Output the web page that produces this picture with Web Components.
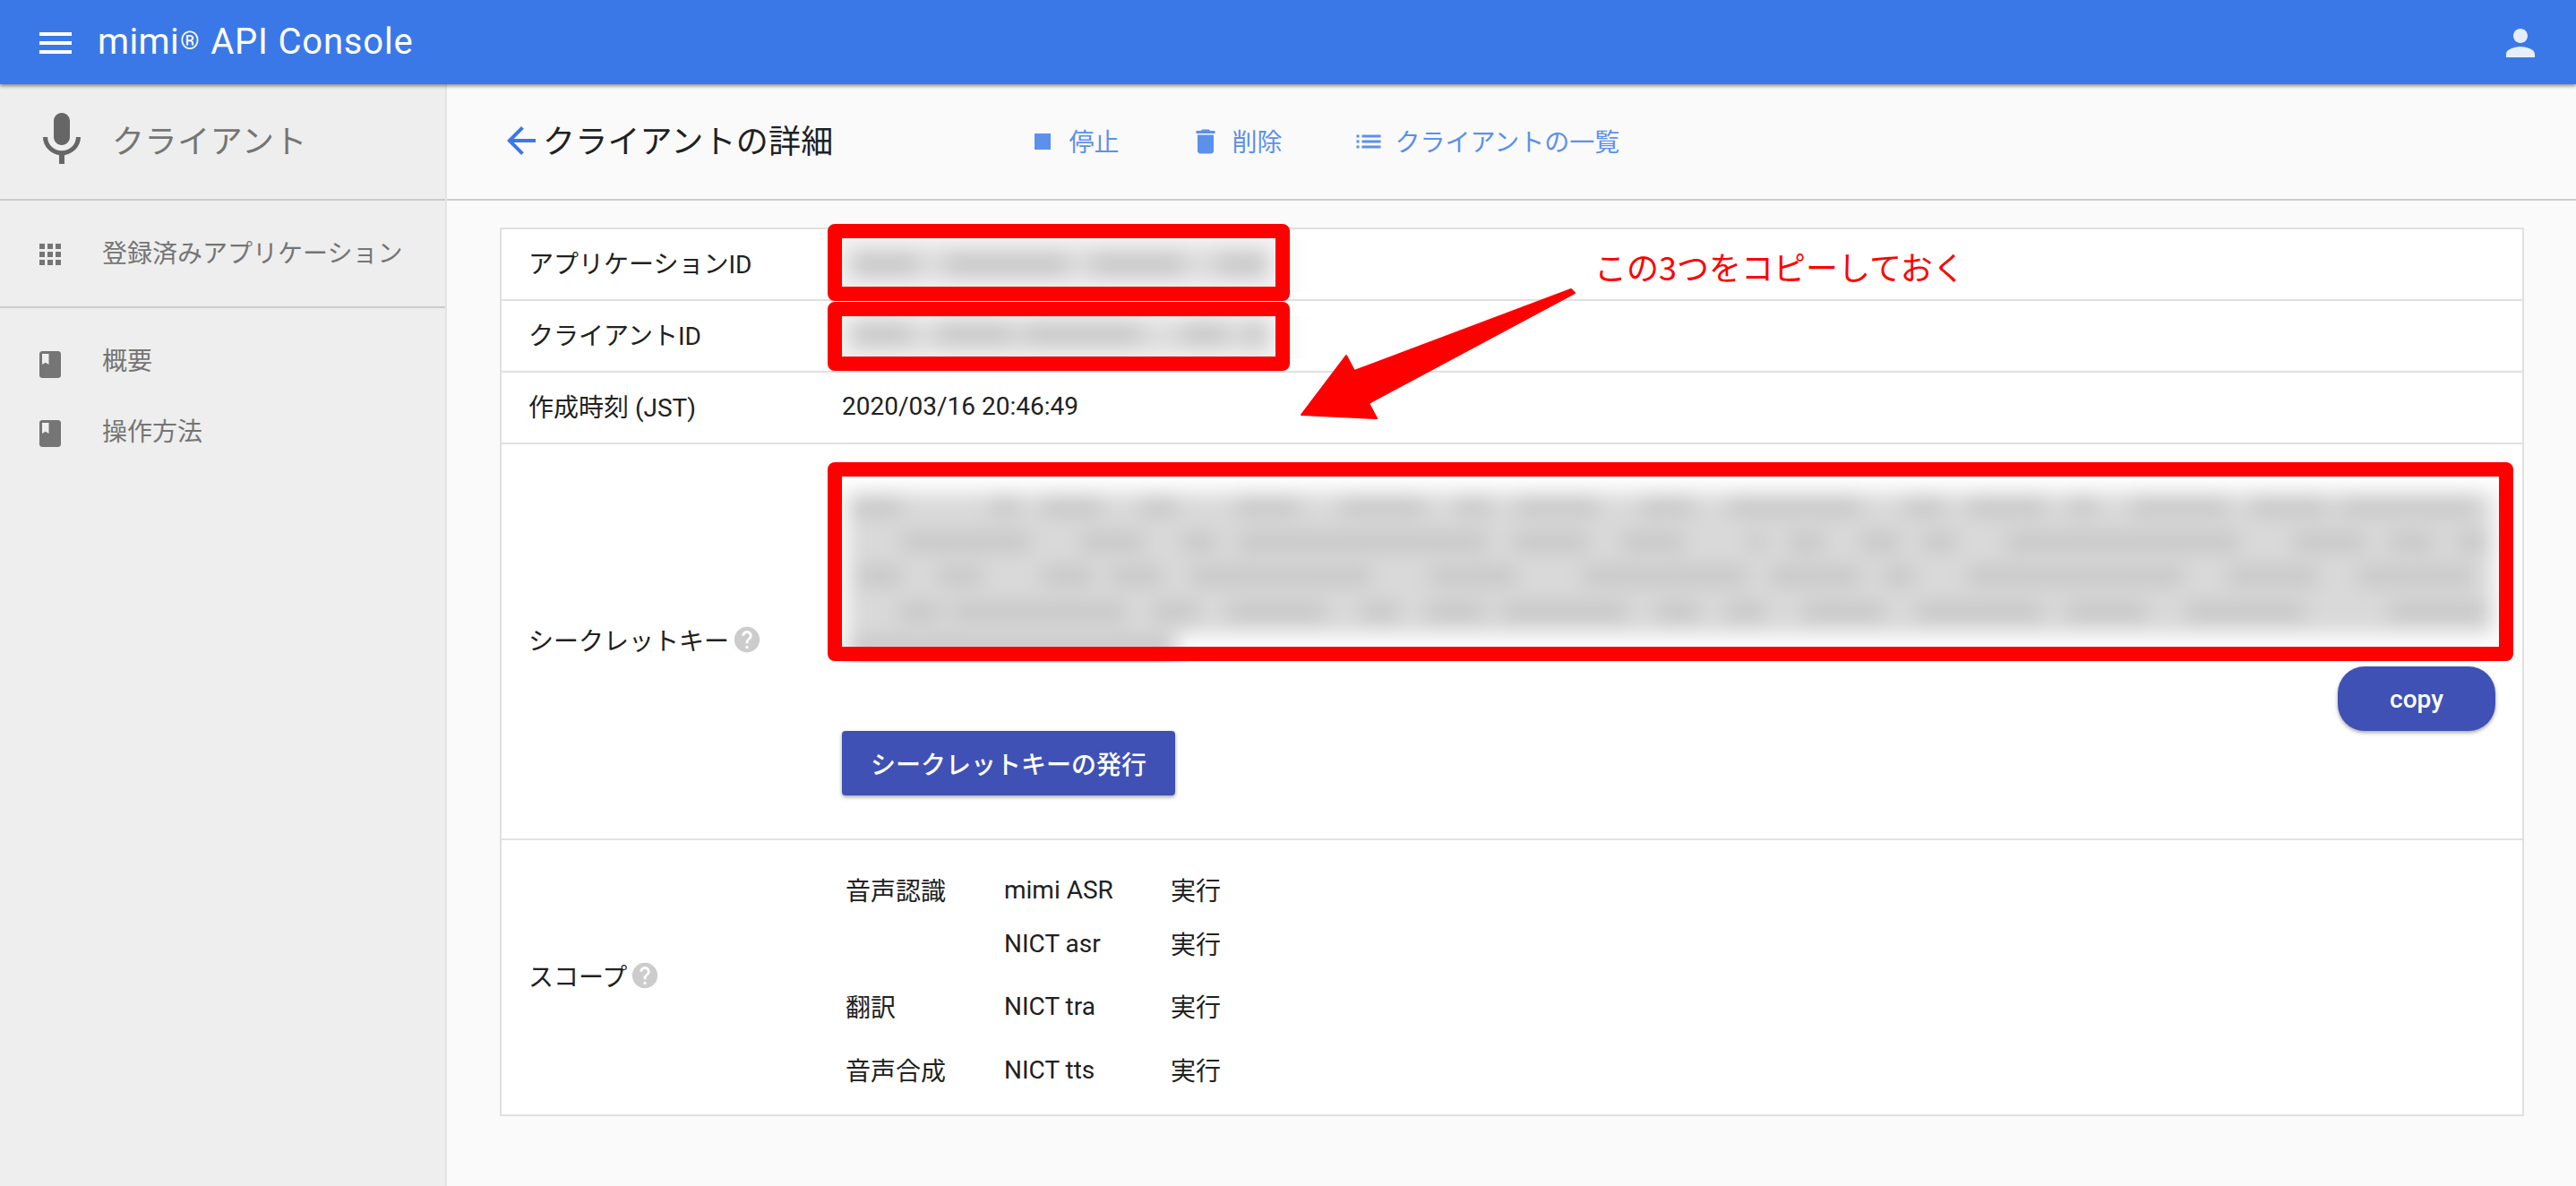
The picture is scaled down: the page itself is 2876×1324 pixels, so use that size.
<!DOCTYPE html>
<html lang="ja"><head><meta charset="utf-8"><title>mimi API Console</title>
<style>
html,body{margin:0;padding:0;height:100%;background:#fafafa;font-family:Roboto,"Noto Sans CJK JP",sans-serif;}
body{width:2876px;height:1324px;overflow:hidden;position:relative}
</style></head><body>
<x-app></x-app>
<script>
const FONT = 'Roboto,"Noto Sans CJK JP",sans-serif';
const ICONS = {
 menu:'M3 18h18v-2H3v2zm0-5h18v-2H3v2zm0-7v2h18V6H3z',
 person:'M12 12c2.21 0 4-1.79 4-4s-1.79-4-4-4-4 1.79-4 4 1.79 4 4 4zm0 2c-2.67 0-8 1.34-8 4v2h16v-2c0-2.66-5.33-4-8-4z',
 mic:'M12 14c1.66 0 2.99-1.34 2.99-3L15 5c0-1.66-1.34-3-3-3S9 3.34 9 5v6c0 1.66 1.34 3 3 3zm5.3-3c0 3-2.54 5.1-5.3 5.1S6.7 14 6.7 11H5c0 3.41 2.72 6.23 6 6.72V21h2v-3.28c3.28-.48 6-3.3 6-6.72h-1.7z',
 apps:'M4 8h4V4H4v4zm6 12h4v-4h-4v4zm-6 0h4v-4H4v4zm0-6h4v-4H4v4zm6 0h4v-4h-4v4zm6-10v4h4V4h-4zm-6 4h4V4h-4v4zm6 6h4v-4h-4v4zm0 6h4v-4h-4v4z',
 book:'M18 2H6c-1.1 0-2 .9-2 2v16c0 1.1.9 2 2 2h12c1.1 0 2-.9 2-2V4c0-1.1-.9-2-2-2zM6 4h5v8l-2.5-1.5L6 12V4z',
 back:'M20 11H7.83l5.59-5.59L12 4l-8 8 8 8 1.41-1.41L7.83 13H20v-2z',
 stop:'M6 6h12v12H6z',
 del:'M6 19c0 1.1.9 2 2 2h8c1.1 0 2-.9 2-2V7H6v12zM19 4h-3.5l-1-1h-5l-1 1H5v2h14V4z',
 list:'M3 13h2v-2H3v2zm0 4h2v-2H3v2zm0-8h2V7H3v2zm4 4h14v-2H7v2zm0 4h14v-2H7v2zM7 7v2h14V7H7z',
 help:'M12 2C6.48 2 2 6.48 2 12s4.48 10 10 10 10-4.48 10-10S17.52 2 12 2zm1 17h-2v-2h2v2zm2.07-7.75l-.9.92C13.45 12.9 13 13.5 13 15h-2v-.5c0-1.1.45-2.1 1.17-2.83l1.24-1.26c.37-.36.59-.86.59-1.41 0-1.1-.9-2-2-2s-2 .9-2 2H8c0-2.21 1.79-4 4-4s4 1.79 4 4c0 .88-.36 1.68-.93 2.25z'
};
const BLUR = {
 b1:{w:484,h:54,sd:11,base:[[-20,-20,524,94,'#f4f4f4'],[6,8,472,38,'#dcdcdc']],rows:[[27,22,[[953,1023],[1057,1190],[1220,1320],[1360,1413]]]]},
 b2:{w:484,h:44,sd:11,base:[[-20,-20,524,84,'#f4f4f4'],[6,4,472,36,'#dcdcdc']],rows:[[19,22,[[953,1017],[1047,1130],[1143,1273],[1320,1370],[1390,1413]]]]},
 b3:{w:1850,h:200,sd:11,base:[[6,14,1838,158,'#d9d9d9'],[6,150,368,70,'#d9d9d9']],rows:[
   [29,20,[[950,1007],[1107,1137],[1163,1230],[1273,1313],[1380,1450],[1497,1590],[1627,1663],[1693,1783],[1833,1890],[1930,1970],[1970,2077],[2127,2170],[2197,2283],[2310,2340],[2380,2487],[2513,2597],[2613,2763]]],
   [69,20,[[1007,1150],[1207,1277],[1320,1357],[1383,1660],[1690,1773],[1810,1880],[1953,1970],[1997,2037],[2077,2120],[2147,2183],[2240,2500],[2560,2640],[2667,2717],[2743,2777]]],
   [107,20,[[957,1007],[1047,1097],[1163,1220],[1240,1297],[1330,1530],[1597,1693],[1767,1950],[1977,2077],[2103,2137],[2197,2437],[2487,2587],[2633,2760]]],
   [147,20,[[1003,1050],[1063,1257],[1287,1337],[1370,1480],[1520,1560],[1593,1657],[1677,1817],[1850,1897],[1927,1970],[2013,2103],[2140,2280],[2307,2397],[2440,2573],[2667,2777]]],
   [186,20,[[950,1310]]]
 ]}
};
function def(name, css, html){
  customElements.define(name, class extends HTMLElement{
    connectedCallback(){
      if(this.shadowRoot) return;
      const r=this.attachShadow({mode:'open'});
      r.innerHTML='<style>'+css+'</style>'+(typeof html==='function'?html(this):html);
    }
  });
}
def('x-icon',':host{display:block;flex:none;line-height:0}svg{display:block}',h=>{
  const s=h.getAttribute('size')||48,c=h.getAttribute('color')||'currentColor';
  return `<svg width="${s}" height="${s}" viewBox="0 0 24 24"><path fill="${c}" d="${ICONS[h.getAttribute('name')]}"/></svg>`;
});
def('x-blur',':host{display:block;clip-path:inset(0 0 -4px 0)}svg{display:block;overflow:visible}',h=>{
  const id=h.getAttribute('data-set'),d=BLUR[id];
  const rects=d.base.map(b=>`<rect x="${b[0]}" y="${b[1]}" width="${b[2]}" height="${b[3]}" fill="${b[4]}"/>`).join('')+
    d.rows.map(([y,t,l])=>l.map(([a,b])=>`<rect x="${a-940}" y="${y-t/2}" width="${b-a}" height="${t}" fill="#c6c6c6"/>`).join('')).join('');
  return `<svg width="${d.w}" height="${d.h}" viewBox="0 0 ${d.w} ${d.h}" style="filter:blur(${d.sd}px)">${rects}</svg>`;
});
def('x-topbar',`:host{display:flex;align-items:center;height:94px;background:#3b78e7;box-shadow:0 2px 4px rgba(0,0,0,.45);position:relative;z-index:2;color:#fff;padding:0 38px;box-sizing:border-box}
 .t{font:400 40px ${FONT};margin-left:23px;letter-spacing:.8px;flex:1;padding-bottom:2px}
 .t span{font-size:27px;position:relative;top:-5px;margin:0 2px 0 1px;letter-spacing:0}
 .m{letter-spacing:.4px;font-style:normal}
 x-icon{margin-top:2px}`,
 `<x-icon name="menu" color="#fff"></x-icon><div class="t"><i class="m">mimi</i><span>®</span> API Console</div><x-icon name="person" color="#e6eefc"></x-icon>`);
def('x-sideitem',`:host{display:flex;align-items:center;height:72px;padding-left:38px;gap:40px;font:400 28px ${FONT};color:#757575}
 span{padding-bottom:var(--lift,7px)}`,
 h=>`<x-icon name="${h.getAttribute('icon')}" size="36" color="#757575"></x-icon><span><slot></slot></span>`);
def('x-sidebar',`:host{display:block;width:499px;box-sizing:border-box;background:#eee;border-right:2px solid #e4e4e4;flex:none}
 .head{height:128px;border-bottom:2px solid #ccc;display:flex;align-items:center;padding-left:33px;gap:20px;font:400 36px ${FONT};color:#757575}
 .head span{padding-bottom:6px;letter-spacing:.6px}.head x-icon{margin-bottom:4px}
 .a{border-bottom:2px solid #ccc;padding-top:24px;height:94px}
 .b{padding-top:27px;display:flex;flex-direction:column;gap:5px}`,
 `<div class="head"><x-icon name="mic" size="72" color="#666"></x-icon><span>クライアント</span></div>
  <div class="a"><x-sideitem icon="apps">登録済みアプリケーション</x-sideitem></div>
  <div class="b"><x-sideitem icon="book" style="--lift:12px">概要</x-sideitem><x-sideitem icon="book" style="--lift:8px">操作方法</x-sideitem></div>`);
def('x-action',`:host{display:flex;align-items:center;gap:11px;font:400 28px ${FONT};color:#5c90ed}
 span{padding-bottom:3px}`,
 h=>`<x-icon name="${h.getAttribute('icon')}" size="36" color="#5c90ed"></x-icon><span><slot></slot></span>`);
def('x-mainhead',`:host{display:flex;align-items:center;height:128px;border-bottom:2px solid #ccc;padding-left:59px}
 h1{margin:0;font:400 36px ${FONT};color:#212121;padding-bottom:6px;letter-spacing:.2px}
 x-icon{margin-bottom:3px}
 .acts{display:flex;gap:79px;margin-left:216px}
 .acts x-action{margin:0}`,
 `<x-icon name="back" color="#3b78e7"></x-icon><h1>クライアントの詳細</h1>
  <div class="acts"><x-action icon="stop">停止</x-action><x-action icon="del">削除</x-action><x-action icon="list">クライアントの一覧</x-action></div>`);
def('x-row',`:host{display:grid;grid-template-columns:350px 1fr;box-sizing:border-box;border-bottom:2px solid #e0e0e0;align-items:center;padding-left:30px;background:#fff;font:400 28px ${FONT};color:#212121;height:80px}
 :host(:last-child){border-bottom:0}
 :host([tall]){height:auto}
 .l{display:flex;align-items:center;gap:6px;padding-bottom:5px}
 .v{padding-bottom:var(--vlift,0)}`,
 `<div class="l"><slot name="label"></slot></div><div class="v"><slot></slot></div>`);
def('x-helpicon',`:host{display:block;width:34px;height:34px;flex:none;margin:0 -3px}`,
 `<x-icon name="help" size="34" color="#cccccc"></x-icon>`);
def('x-button',`:host{display:inline-flex;align-items:center;justify-content:center;height:72px;box-sizing:border-box;background:#3f51b5;color:#fff;font:500 28px ${FONT};border-radius:4px;box-shadow:0 2px 4px rgba(0,0,0,.35);padding:0 32px}
 :host([pill]){border-radius:30px;width:176px;padding:0}`,`<slot></slot>`);
def('x-details',`:host{display:block;border:2px solid #e0e0e0;background:#fff}`,`<slot></slot>`);
def('x-scope',`:host{display:grid;grid-template-columns:177px 186px auto;grid-template-rows:60px 60px 80px 62px;align-items:center;justify-content:start;padding:25px 0 19px 4px;font:400 28px ${FONT};color:#212121}`,`<slot></slot>`);
def('x-secret',`:host{display:flex;flex-direction:column;padding:40px 26px 48px 0}
 .c{display:flex;justify-content:flex-end;margin:8px 4px 0 0}.i{display:flex}`,
 `<slot name="blur"></slot><div class="c"><slot name="copy"></slot></div><div class="i"><slot name="issue"></slot></div>`);
def('x-annotations',`:host{position:absolute;left:0;top:0;width:2876px;height:1324px;pointer-events:none;z-index:3}
 .r{position:absolute;box-sizing:border-box;border:16px solid #f00;border-radius:8px}
 .t{position:absolute;left:1780px;top:272px;font:400 36px "Noto Sans CJK JP",sans-serif;color:#f00;white-space:nowrap;line-height:50px}
 svg{position:absolute;left:0;top:0}`,
 `<div class="r" style="left:924px;top:250px;width:516px;height:86px"></div>
  <div class="r" style="left:924px;top:337px;width:516px;height:77px"></div>
  <div class="r" style="left:924px;top:516px;width:1882px;height:222px"></div>
  <div class="t">この3つをコピーしておく</div>
  <svg width="2876" height="1324"><polygon fill="#f00" stroke="#f00" stroke-width="2" stroke-linejoin="round" points="1754,323 1758,327 1528,450 1537,467 1453,463 1503,397 1512,414"/></svg>`);
def('x-app',`:host{display:block;width:2876px;height:1324px}
 .body{display:flex;height:1230px}
 .main{flex:1;min-width:0}
 .content{padding:30px 58px 0 59px}`,
 `<x-topbar></x-topbar><div class="body"><x-sidebar></x-sidebar><div class="main"><x-mainhead></x-mainhead><div class="content"><x-details>
  <x-row><span slot="label">アプリケーションID</span><x-blur data-set="b1"></x-blur></x-row>
  <x-row><span slot="label">クライアントID</span><x-blur data-set="b2"></x-blur></x-row>
  <x-row style="--vlift:3px"><span slot="label">作成時刻 (JST)</span><span>2020/03/16 20:46:49</span></x-row>
  <x-row tall><span slot="label">シークレットキー</span><x-helpicon slot="label"></x-helpicon>
    <x-secret><x-blur slot="blur" data-set="b3"></x-blur><x-button slot="copy" pill>copy</x-button><x-button slot="issue">シークレットキーの発行</x-button></x-secret></x-row>
  <x-row tall><span slot="label">スコープ</span><x-helpicon slot="label"></x-helpicon>
    <x-scope>
     <span>音声認識</span><span>mimi ASR</span><span>実行</span>
     <span></span><span>NICT asr</span><span>実行</span>
     <span>翻訳</span><span>NICT tra</span><span>実行</span>
     <span>音声合成</span><span>NICT tts</span><span>実行</span>
    </x-scope></x-row>
 </x-details></div></div></div><x-annotations></x-annotations>`);
</script>
</body></html>
